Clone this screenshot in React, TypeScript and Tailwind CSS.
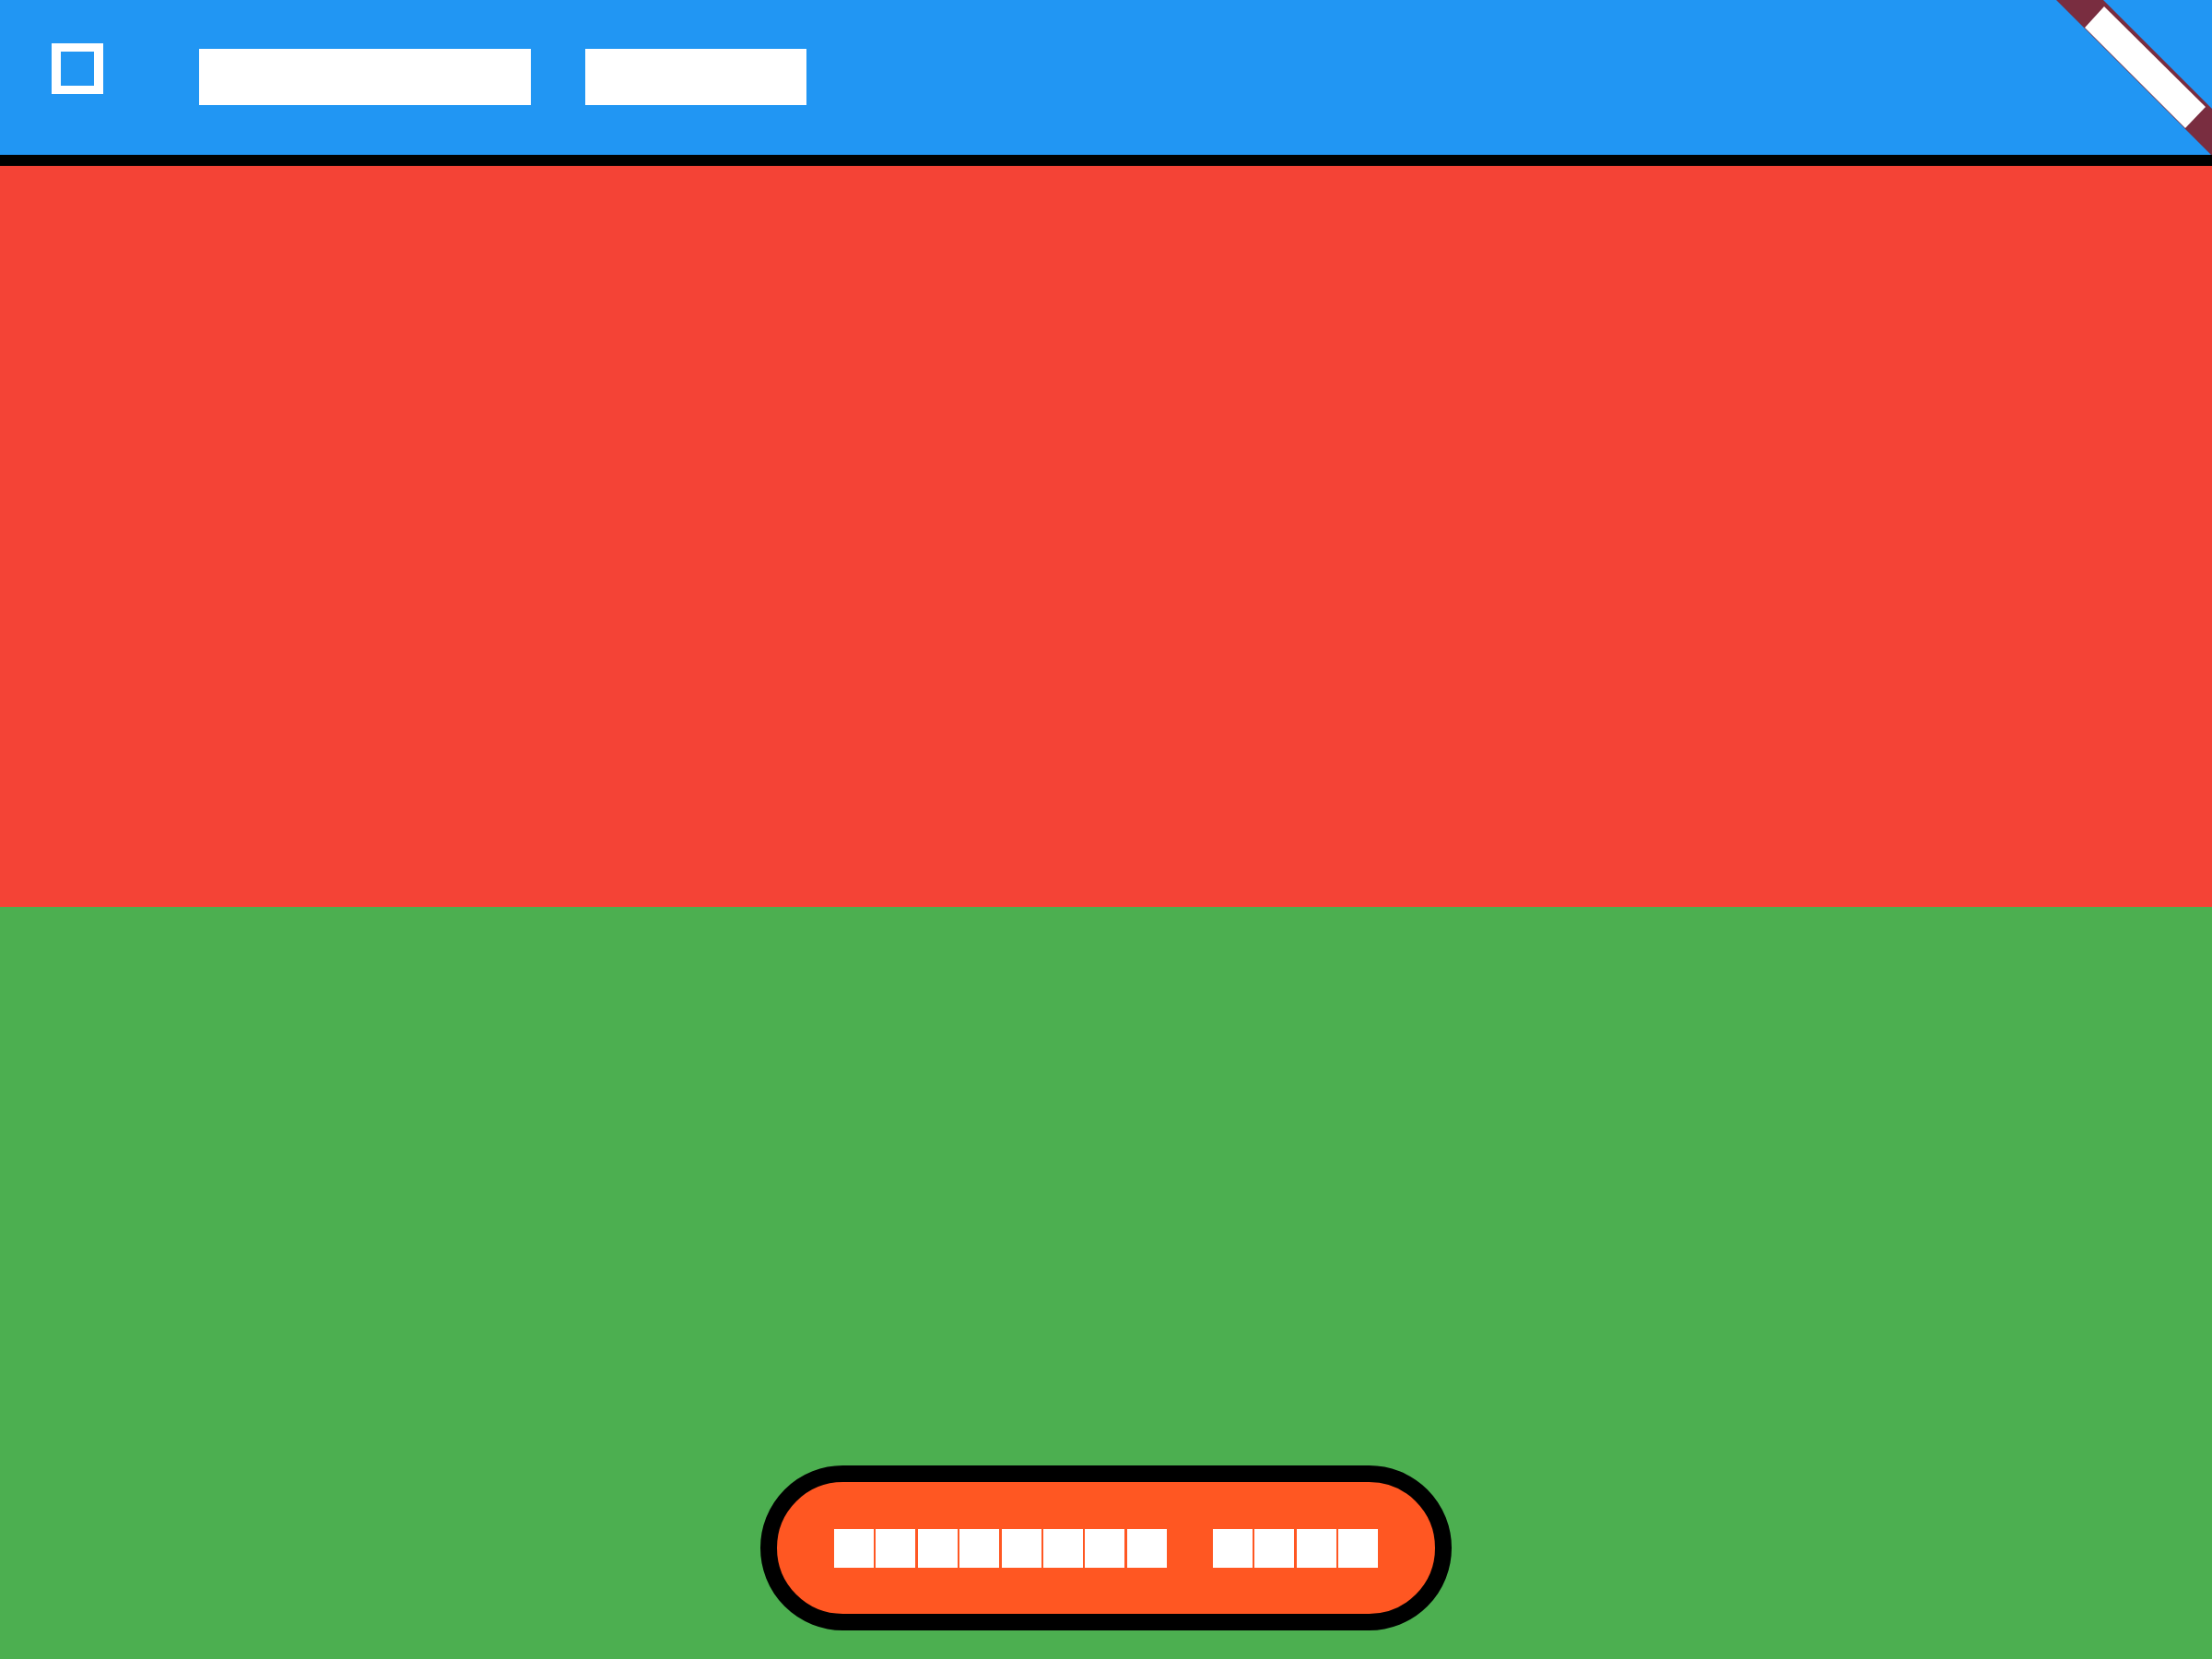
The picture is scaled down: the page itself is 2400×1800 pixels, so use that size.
const titleWords = ["Layout", "Demo"];
const buttonWords = ["Navigate", "Back"];

function TofuWord({ word, box }: { word: string; box: string }) {
  return (
    <span className="flex">
      {word.split("").map((ch, i) => (
        <span
          key={i}
          className={`${box} flex items-center justify-center overflow-hidden bg-white text-transparent select-none`}
        >
          {ch}
        </span>
      ))}
    </span>
  );
}

function DebugBanner() {
  return (
    <svg
      className="absolute top-0 right-0"
      width="169"
      height="168"
      viewBox="0 0 169 168"
    >
      <polygon points="0,0 51,0 169,118 169,168 168,168" fill="#792d40" />
      <polygon points="31,30 52,7 162,116 140,139" fill="#ffffff" />
    </svg>
  );
}

export default function App() {
  return (
    <div className="relative flex h-[1800px] w-[2400px] flex-col overflow-hidden font-['Roboto',sans-serif]">
      {/* App bar */}
      <header className="flex h-[180px] shrink-0 border-b-[12px] border-black bg-[#2196F3]">
        <div className="ml-[56px] mt-[47px] h-[55px] w-[56px] border-x-[10px] border-y-[9px] border-white" />
        <div className="ml-[104px] mt-[53px] flex gap-[59px] text-[32px] leading-none">
          {titleWords.map((w) => (
            <TofuWord key={w} word={w} box="h-[61px] w-[60px]" />
          ))}
        </div>
      </header>

      {/* Top panel */}
      <section className="h-[804px] shrink-0 bg-[#F44336]" />

      {/* Bottom panel */}
      <section className="flex flex-1 flex-col items-center justify-end bg-[#4CAF50] pb-[31px]">
        <button className="flex h-[179px] w-[750px] items-center justify-center rounded-full border-[18px] border-black bg-[#FF5722]">
          <span className="flex gap-[50px] text-[22px] leading-none">
            {buttonWords.map((w) => (
              <span key={w} className="flex gap-[2.4px]">
                {w.split("").map((ch, i) => (
                  <span
                    key={i}
                    className="flex h-[42px] w-[43px] items-center justify-center overflow-hidden bg-white text-transparent select-none"
                  >
                    {ch}
                  </span>
                ))}
              </span>
            ))}
          </span>
        </button>
      </section>

      <DebugBanner />
    </div>
  );
}
